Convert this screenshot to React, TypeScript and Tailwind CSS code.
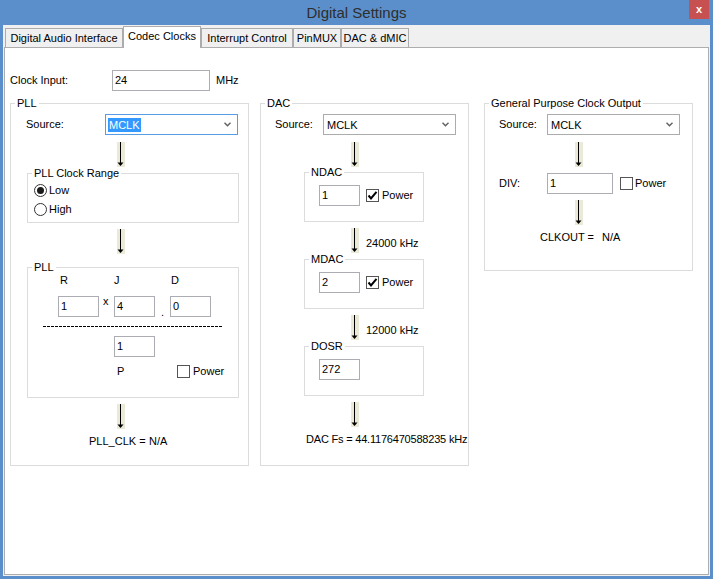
import type { ReactNode } from 'react';

function Arrow({ className = '' }: { className?: string }) {
  return (
    <svg className={`block shrink-0 ${className}`} width="8" height="25" viewBox="0 0 8 25">
      <rect width="8" height="25" fill="#ebe9d7" />
      <path d="M3.5 0V21" stroke="#000" strokeWidth="1" />
      <path d="M0.5 20.5H6.5L3.5 24Z" fill="#000" />
    </svg>
  );
}

function TextBox({ value, className = '' }: { value: string; className?: string }) {
  return (
    <div className={`h-[21px] shrink-0 border border-[#abadb3] bg-white px-[2px] pt-[3px] leading-[13px] ${className}`}>
      {value}
    </div>
  );
}

function Select({ focused = false, className = '' }: { focused?: boolean; className?: string }) {
  return (
    <div
      className={`flex h-[21px] shrink-0 items-center justify-between border bg-white pl-[2px] pr-[6px] ${
        focused ? 'border-[#569de5]' : 'border-[#acacac]'
      } ${className}`}
    >
      <span className={focused ? 'bg-[#3399ff] px-[1px] leading-[14px] text-white' : 'px-[1px] leading-[14px]'}>MCLK</span>
      <svg width="7" height="5" viewBox="0 0 7 5">
        <path d="M0.5 0.8L3.5 3.8L6.5 0.8" fill="none" stroke="#606060" strokeWidth="1.4" />
      </svg>
    </div>
  );
}

function CheckBox({ checked = false }: { checked?: boolean }) {
  return (
    <span className="flex h-[13px] w-[13px] shrink-0 items-center justify-center border border-[#555] bg-white">
      {checked && (
        <svg width="11" height="11" viewBox="0 0 11 11">
          <path d="M1.5 5.5L4 8.5L9.5 1.8" fill="none" stroke="#000" strokeWidth="2" />
        </svg>
      )}
    </span>
  );
}

function Radio({ checked = false, label }: { checked?: boolean; label: string }) {
  return (
    <div className="flex items-center">
      <span className="flex h-[13px] w-[13px] items-center justify-center rounded-full border border-[#333] bg-white">
        {checked && <span className="h-[7px] w-[7px] rounded-full bg-[#1a1a1a]" />}
      </span>
      <span className="ml-[2px]">{label}</span>
    </div>
  );
}

function Group({ title, className = '', children }: { title: string; className?: string; children: ReactNode }) {
  return (
    <fieldset className={`min-w-0 shrink-0 border border-[#dcdcdc] ${className}`}>
      <legend className="ml-[4px] px-[2px] leading-[10px]">{title}</legend>
      {children}
    </fieldset>
  );
}

function Tab({ label, width, active = false }: { label: string; width: string; active?: boolean }) {
  if (active) {
    return (
      <div className={`relative z-10 -mb-[1px] flex h-[22px] ${width} justify-center border-x border-t border-[#acacac] bg-white pt-[3px]`}>
        {label}
      </div>
    );
  }
  return (
    <div className={`flex h-[19px] ${width} items-center justify-center border-x border-t border-[#acacac] bg-[#f0f0f0]`}>
      {label}
    </div>
  );
}

export default function App() {
  return (
    <div className="flex h-[579px] w-[713px] flex-col bg-[#5b8fcb] px-[3px] pb-[3px] font-['Liberation_Sans',Arial,sans-serif] text-[11px] leading-[13px] text-black">
      {/* title bar */}
      <div className="relative flex h-[25px] shrink-0 items-center justify-center text-[15px] text-[#2e2e2e]">
        Digital Settings
        <div className="absolute right-[1px] top-0 flex h-[19px] w-[20px] items-center justify-center bg-[#c75050] text-[11px] font-bold text-white">
          x
        </div>
      </div>

      <div className="flex flex-1 flex-col bg-[#f0f0f0]">
        {/* tabs */}
        <div className="flex h-[22px] shrink-0 items-end pl-[2px]">
          <Tab label="Digital Audio Interface" width="w-[118px]" />
          <Tab label="Codec Clocks" width="w-[78px]" active />
          <Tab label="Interrupt Control" width="w-[92px]" />
          <Tab label="PinMUX" width="w-[48px]" />
          <Tab label="DAC & dMIC" width="w-[68px]" />
        </div>

        <div className="mx-[1px] mb-[1px] flex-1 border border-[#adadad] bg-white">
          {/* clock input */}
          <div className="ml-[5px] mt-[22px] flex items-center">
            <span className="w-[102px]">Clock Input:</span>
            <TextBox value="24" className="w-[98px]" />
            <span className="ml-[6px]">MHz</span>
          </div>

          <div className="mt-[7px] flex items-start">
            {/* PLL */}
            <Group title="PLL" className="ml-[5px] h-[368px] w-[239px]">
              <div className="ml-[15px] mt-[6px] flex items-center">
                <span className="w-[79px]">Source:</span>
                <Select focused className="w-[133px]" />
              </div>
              <Arrow className="ml-[106px] mt-[7px]" />
              <Group title="PLL Clock Range" className="ml-[16px] mt-[1px] h-[55px] w-[212px]">
                <div className="ml-[6px] mt-[6px]">
                  <Radio checked label="Low" />
                </div>
                <div className="ml-[6px] mt-[6px]">
                  <Radio label="High" />
                </div>
              </Group>
              <Arrow className="ml-[106px] mt-[6px]" />
              <Group title="PLL" className="ml-[16px] mt-[8px] h-[136px] w-[212px]">
                <div className="ml-[32px] mt-[2px] flex">
                  <span className="w-[54px]">R</span>
                  <span className="w-[57px]">J</span>
                  <span>D</span>
                </div>
                <div className="ml-[30px] mt-[9px] flex">
                  <TextBox value="1" className="w-[41px]" />
                  <span className="w-[15px] pl-[4px] leading-[10px]">x</span>
                  <TextBox value="4" className="w-[41px]" />
                  <span className="w-[15px] self-end pl-[6px] leading-[10px]">.</span>
                  <TextBox value="0" className="w-[41px]" />
                </div>
                <div className="ml-[15px] mt-[9px] h-[1px] w-[180px] bg-[repeating-linear-gradient(to_right,#000_0_3px,transparent_3px_4px)]" />
                <TextBox value="1" className="ml-[86px] mt-[9px] w-[41px]" />
                <div className="ml-[89px] mt-[7px] flex h-[15px] items-center">
                  <span className="w-[60px]">P</span>
                  <CheckBox />
                  <span className="ml-[3px]">Power</span>
                </div>
              </Group>
              <Arrow className="ml-[106px] mt-[6px]" />
              <div className="ml-[78px] mt-[6px] flex">
                <span className="w-[60px]">PLL_CLK =</span>
                <span>N/A</span>
              </div>
            </Group>

            {/* DAC */}
            <Group title="DAC" className="ml-[11px] h-[368px] w-[209px]">
              <div className="ml-[14px] mt-[6px] flex items-center">
                <span className="w-[48px]">Source:</span>
                <Select className="w-[133px]" />
              </div>
              <Arrow className="ml-[90px] mt-[7px]" />
              <Group title="NDAC" className="ml-[43px] h-[55px] w-[120px]">
                <div className="ml-[14px] mt-[8px] flex items-center">
                  <TextBox value="1" className="w-[41px]" />
                  <span className="ml-[6px]">
                    <CheckBox checked />
                  </span>
                  <span className="ml-[3px]">Power</span>
                </div>
              </Group>
              <div className="mt-[6px] flex items-start">
                <Arrow className="ml-[90px]" />
                <span className="ml-[7px] mt-[9px]">24000 kHz</span>
              </div>
              <Group title="MDAC" className="ml-[43px] mt-[1px] h-[55px] w-[120px]">
                <div className="ml-[14px] mt-[8px] flex items-center">
                  <TextBox value="2" className="w-[41px]" />
                  <span className="ml-[6px]">
                    <CheckBox checked />
                  </span>
                  <span className="ml-[3px]">Power</span>
                </div>
              </Group>
              <div className="mt-[6px] flex items-start">
                <Arrow className="ml-[90px]" />
                <span className="ml-[7px] mt-[9px]">12000 kHz</span>
              </div>
              <Group title="DOSR" className="ml-[43px] mt-[1px] h-[55px] w-[120px]">
                <TextBox value="272" className="ml-[14px] mt-[8px] w-[41px]" />
              </Group>
              <Arrow className="ml-[90px] mt-[6px]" />
              <div className="ml-[45px] mt-[6px] whitespace-nowrap tracking-[-0.2px]">DAC Fs = 44.1176470588235 kHz</div>
            </Group>

            {/* General purpose clock output */}
            <Group title="General Purpose Clock Output" className="ml-[15px] h-[173px] w-[209px]">
              <div className="ml-[14px] mt-[6px] flex items-center">
                <span className="w-[48px]">Source:</span>
                <Select className="w-[133px]" />
              </div>
              <Arrow className="ml-[90px] mt-[7px]" />
              <div className="ml-[14px] mt-[6px] flex items-center">
                <span className="w-[48px]">DIV:</span>
                <TextBox value="1" className="w-[66px]" />
                <span className="ml-[7px]">
                  <CheckBox />
                </span>
                <span className="ml-[2px]">Power</span>
              </div>
              <Arrow className="ml-[90px] mt-[6px]" />
              <div className="ml-[55px] mt-[6px] flex">
                <span className="w-[62px]">CLKOUT =</span>
                <span>N/A</span>
              </div>
            </Group>
          </div>
        </div>
      </div>
    </div>
  );
}
